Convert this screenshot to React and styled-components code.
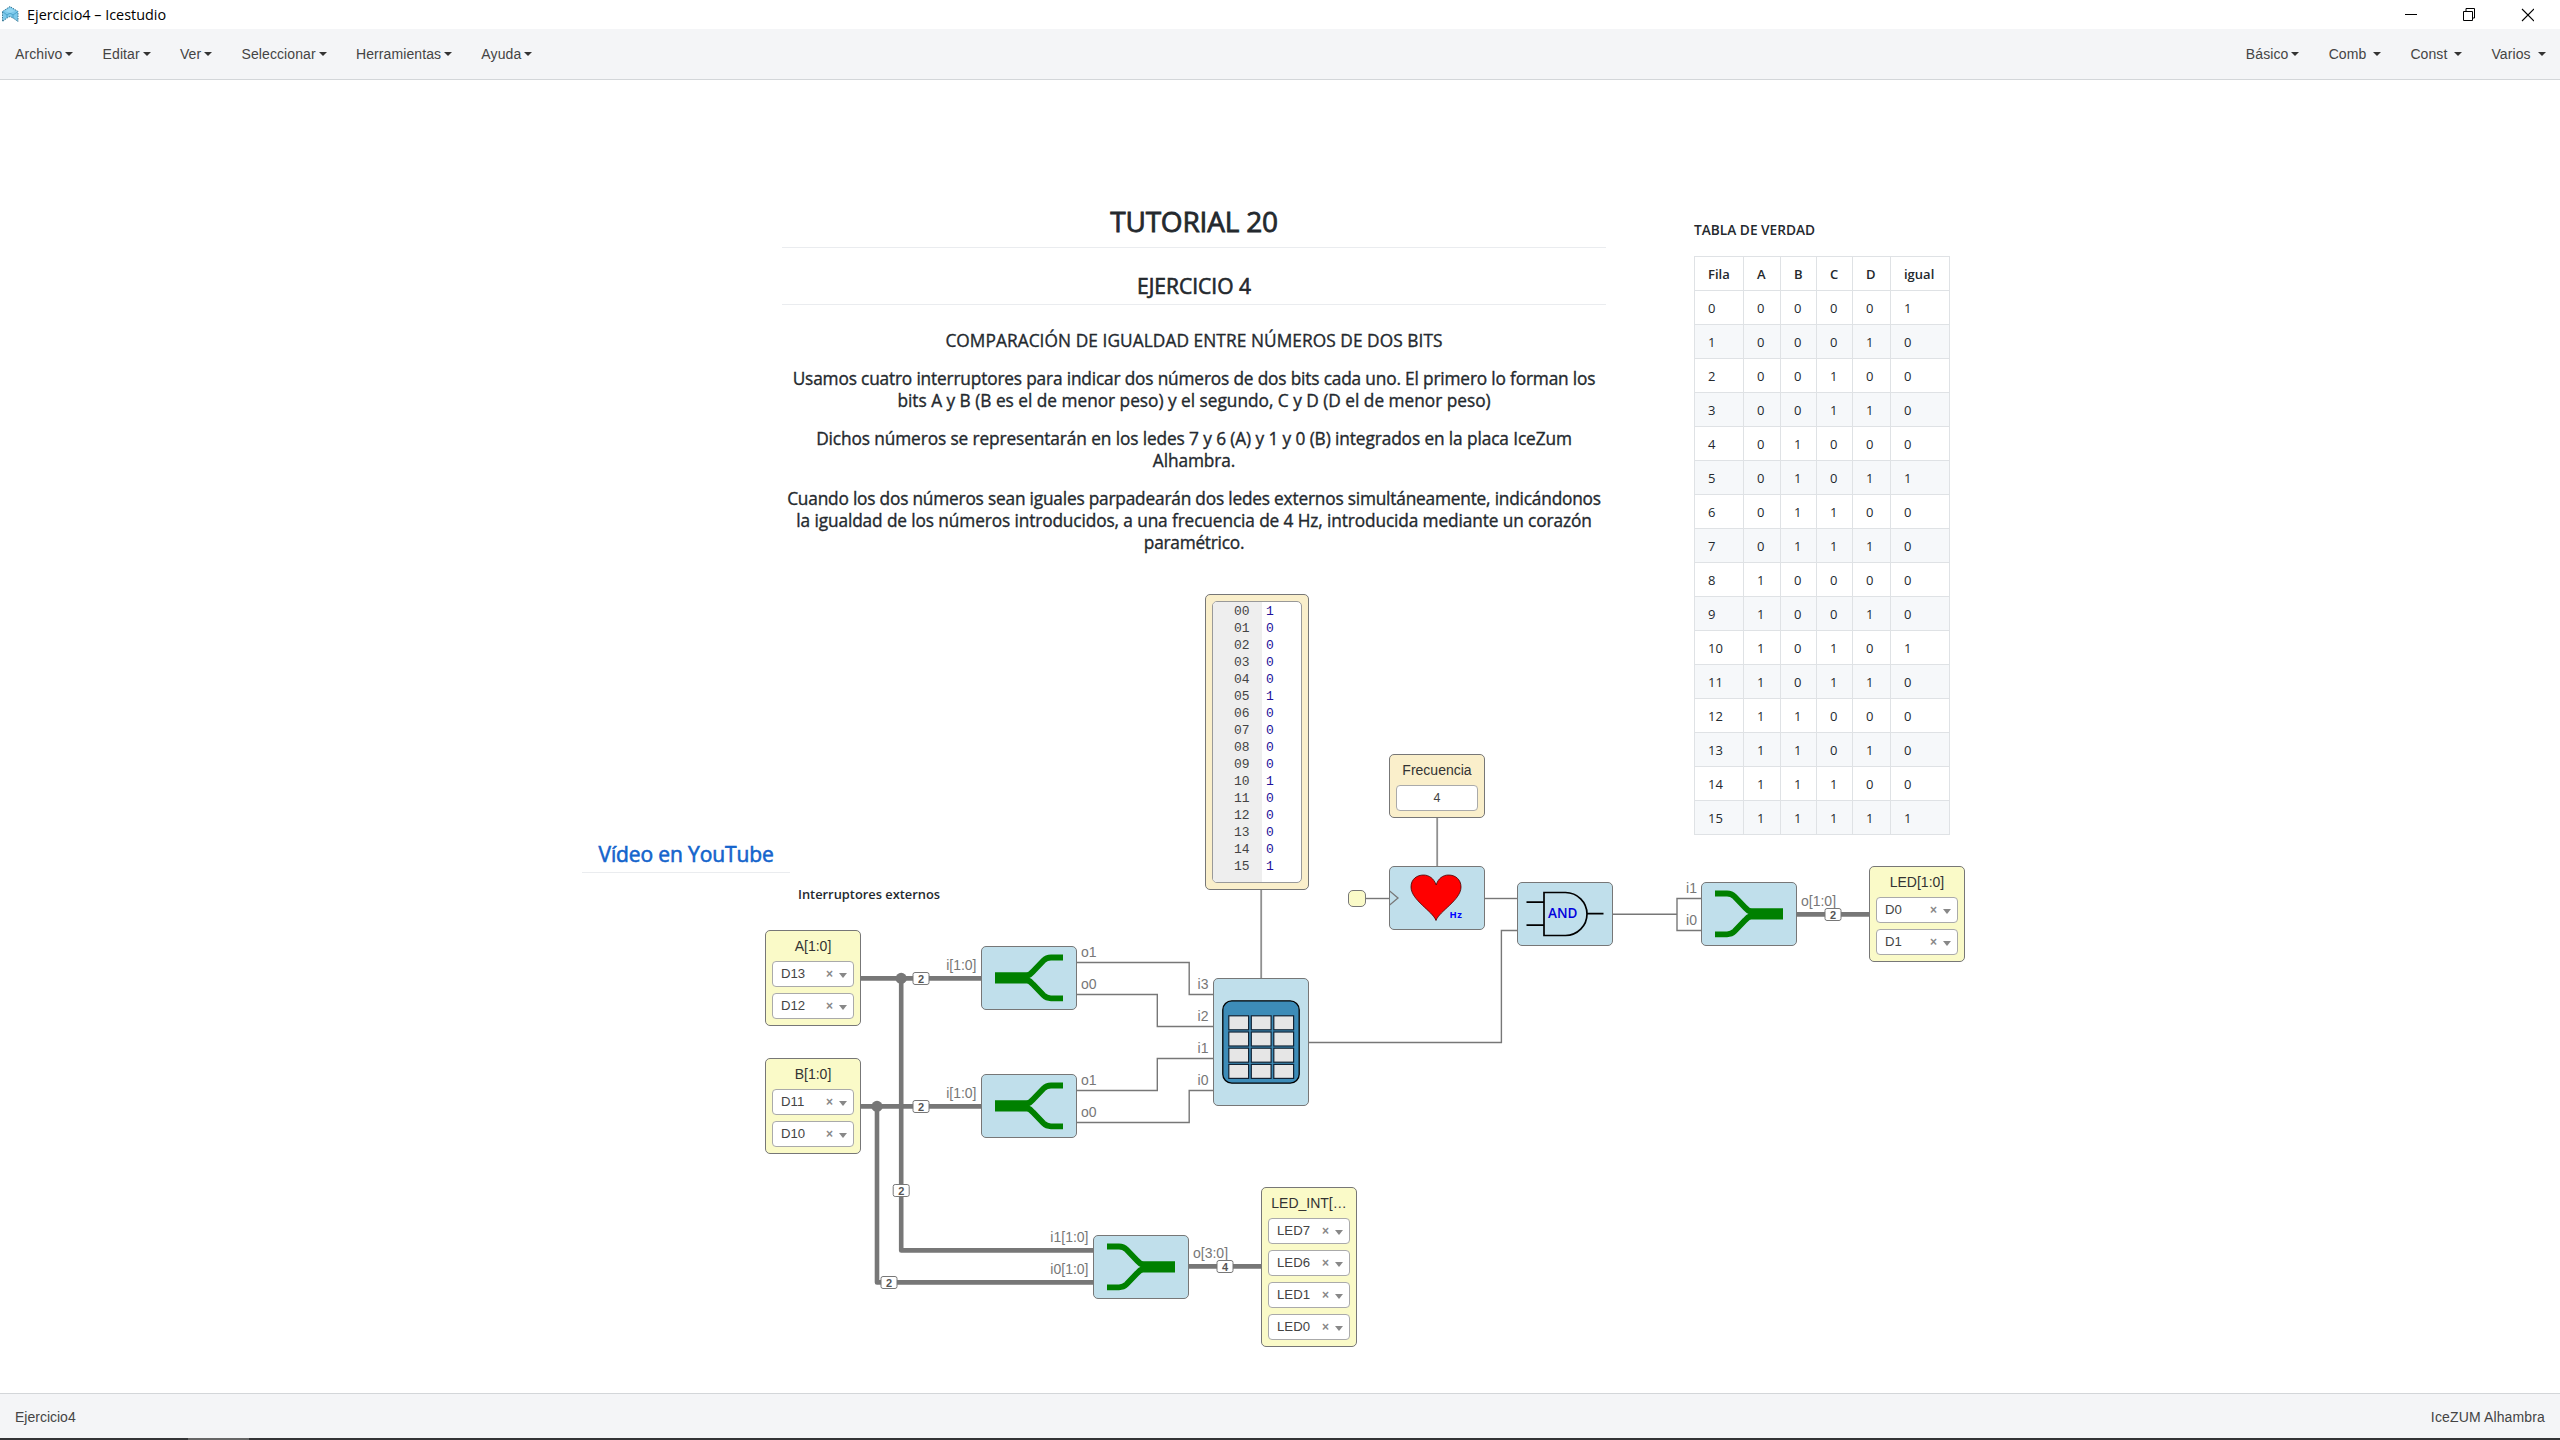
import React from 'react';
import styled, { createGlobalStyle, css } from 'styled-components';

const sans = '"Liberation Sans", Arial, sans-serif';
const doc = '"Open Sans", "Noto Sans", sans-serif';
const mono = '"Liberation Mono", "DejaVu Sans Mono", monospace';

const Global = createGlobalStyle`
  *, *::before, *::after { box-sizing: border-box; }
  body { margin: 0; background: #fff; font-family: ${sans}; overflow: hidden; }
`;

const Window = styled.div`
  display: flex;
  flex-direction: column;
  width: 2560px;
  height: 1440px;
`;

const TitleBar = styled.header`
  display: flex;
  justify-content: space-between;
  height: 29px;
  padding: 0 26px 0 2px;
`;

const TitleSide = styled.div`
  display: flex;
  align-items: center;
  gap: ${(p) => p.$gap}px;
`;

const Title = styled.span`
  font: 14.4px/29px ${doc};
  color: #000;
  white-space: nowrap;
`;

const MenuBar = styled.nav`
  display: flex;
  justify-content: space-between;
  height: 51px;
  padding: 0 14.5px 0 15px;
  background: #f4f5f7;
  border-bottom: 1px solid #d3d6d9;
`;

const MenuGroup = styled.div`
  display: flex;
  gap: 29.2px;
`;

const MenuItem = styled.div`
  display: flex;
  align-items: center;
  gap: ${(p) => p.$gap || 3}px;
  font-size: 14px;
  line-height: 50px;
  letter-spacing: 0.1px;
  color: #444;
  white-space: nowrap;

  &::after {
    content: '';
    border: 4px solid transparent;
    border-top-color: #333;
    border-bottom: 0;
  }
`;

const Canvas = styled.main`
  position: relative;
  flex: 1;
`;

const Wires = styled.svg`
  position: absolute;
  left: 0;
  top: -80px;
  width: 2560px;
  height: 1440px;
  font: 14px ${sans};
  fill: none;
`;

const PortLabel = styled.text`
  fill: #777;
  text-anchor: ${(p) => (p.$end ? 'end' : 'start')};
`;

const BadgeText = styled.text`
  font: bold 11px ${sans};
  fill: #555;
  text-anchor: middle;
`;

const placed = css`
  position: absolute;
  left: ${(p) => p.$x}px;
  top: ${(p) => p.$y - 80}px;
  width: ${(p) => p.$w}px;
`;

const Note = styled.section`
  ${placed}
  font-family: ${doc};
  color: #24292e;
  white-space: nowrap;
  text-align: ${(p) => p.$align || 'left'};
`;

const Heading = styled.h1`
  margin: 0 0 24px;
  padding-bottom: 8px;
  border-bottom: 1px solid #eaecef;
  font-size: 28px;
  font-weight: 400;
  line-height: 36px;
  letter-spacing: -0.2px;
  -webkit-text-stroke: 0.8px;
`;

const SubHeading = styled.h2`
  margin: 0 0 25px;
  padding-bottom: 3px;
  border-bottom: 1px solid #eaecef;
  font-size: 21px;
  font-weight: 400;
  line-height: 29px;
  -webkit-text-stroke: 0.6px;
`;

const Paragraph = styled.p`
  margin: 0 0 16px;
  font-size: 17.3px;
  line-height: 22px;
  -webkit-text-stroke: 0.35px;
`;

const Line = styled.span`
  display: block;
  letter-spacing: ${(p) => p.$track || 0}px;
`;

const VideoLink = styled.div`
  height: 33px;
  padding-left: 16.5px;
  border-bottom: 1px solid #eaecef;
  font-size: 21px;
  line-height: 28px;
  letter-spacing: -0.12px;
  color: #1464cc;
  -webkit-text-stroke: 0.6px;
`;

const Caption = styled.div`
  font-size: ${(p) => p.$size}px;
  font-weight: 600;
  line-height: 20px;
`;

const TruthTable = styled.div`
  display: grid;
  grid-template-columns: 49px 37px 36px 36px 38px 59px;
  grid-auto-rows: 34.03px;
  width: 256px;
  margin-top: 16px;
  border: solid #dfe2e5;
  border-width: 1px 0 0 1px;
`;

const Cell = styled.div`
  padding-left: 13px;
  border: solid #dfe2e5;
  border-width: 0 1px 1px 0;
  background: ${(p) => (p.$odd ? '#f6f8fa' : '#fff')};
  font-size: 13px;
  font-weight: ${(p) => (p.$head ? 600 : 400)};
  line-height: 34px;
`;

const Block = styled.div`
  ${placed}
  display: flex;
  flex-direction: column;
  align-items: center;
  height: ${(p) => p.$h}px;
  border: 1px solid #777;
  border-radius: 5px;
  background: ${(p) => ({ io: '#fafac8', code: '#c0dfeb', param: '#faefcb' }[p.$kind])};

  > svg { margin: -1px; flex: none; }
`;

const BlockLabel = styled.div`
  height: 30px;
  font-size: 14px;
  line-height: 31px;
  color: #333;
  white-space: nowrap;
`;

const Select = styled.div`
  display: flex;
  align-items: center;
  width: 82px;
  height: 26px;
  margin-bottom: 6px;
  padding: 0 6px 2px 8px;
  border: 1px solid #aaa;
  border-radius: 4px;
  background: #fff;
  font-size: 13.2px;
  color: #444;

  &::after {
    content: '';
    margin-top: 5px;
    border: 4px solid transparent;
    border-top: 5px solid #888;
    border-bottom: 0;
  }
`;

const Clear = styled.span`
  margin: 1px 6px 0 auto;
  font-size: 12px;
  font-weight: bold;
  color: #888;
`;

const ParamInput = styled.div`
  width: 82px;
  height: 26px;
  border: 1px solid #aaa;
  border-radius: 4px;
  background: #fff;
  font-size: 12.5px;
  line-height: 25px;
  text-align: center;
  color: #444;
`;

const Editor = styled.div`
  display: flex;
  width: 90px;
  height: 282px;
  margin-top: 6px;
  border: 1px solid #999;
  border-radius: 5px;
  overflow: hidden;
  background: #fff;
  font: 13px/17.02px ${mono};
`;

const Gutter = styled.div`
  width: 49px;
  padding: 1px 0 0 21px;
  background: #eee;
  color: #444;
`;

const Code = styled.div`
  padding: 1px 0 0 4px;
  color: #221199;
`;

const Footer = styled.footer`
  display: flex;
  justify-content: space-between;
  height: 45px;
  padding: 0 15px;
  background: #f4f5f7;
  border-top: 1px solid #d3d6d9;
  font-size: 14px;
  line-height: 47px;
  color: #444;
`;

const Board = styled.span`
  letter-spacing: 0.14px;
`;

const TaskStrip = styled.div`
  display: flex;
  height: 2px;
  padding-left: 188px;
  background: #333436;

  &::before { content: ''; width: 61px; background: #666; }
`;

const romBits = '1000010000100001'.split('');
const rows = Array.from({ length: 16 }, (_, i) => [
  i, (i >> 3) & 1, (i >> 2) & 1, (i >> 1) & 1, i & 1, romBits[i],
]);

const IceLogo = () => (
  <svg width="17" height="17" viewBox="0 0 17 17">
    <path d="M0.5 5.5 L8 .5 L16 5.5 V15.5 L11 12 L8 10.5 L5 12 L.5 15.5Z" fill="#7cc8ea" stroke="#3a7894" strokeDasharray="1.5 1" />
    <path d="M.5 5.5 L5 9 L8 7 L11 9 L16 5.5 M5 9V12 M11 9V12" fill="none" stroke="#4aa3cc" />
    <path d="M3 5 L8 2 L13 5 L8 7Z" fill="#93d6f2" />
  </svg>
);

const Controls = () => (
  <svg width="129" height="14" viewBox="0 0 129 14" fill="none" stroke="#000">
    <path d="M0 6.5H12 M58.5 3.5H67.5V12.5H58.5Z M61 3V.5H69.5V10H68" />
    <path d="M117 1L129 13 M129 1L117 13" strokeWidth="1.1" />
  </svg>
);

const Bus = ({ flip }) => (
  <svg width="96" height="64" viewBox="0 0 96 64">
    <g transform={flip ? 'translate(96 0) scale(-1 1)' : undefined}>
      <path d="M14 26.2H48V37.6H14Z" fill="#008000" />
      <path d="M45 30.5Q49 29 52 25.5L62.5 14.5Q65.5 11.5 70 11.5H82M45 33.3Q49 34.8 52 38.3L62.5 49.3Q65.5 52.3 70 52.3H82" fill="none" stroke="#008000" strokeWidth="5.8" />
    </g>
  </svg>
);

const Heart = () => (
  <svg width="96" height="64" viewBox="0 0 96 64">
    <path d="M0 24.5L9 32L0 39.5" fill="none" stroke="#777" strokeWidth="1.3" />
    <path d="M47 54.5C43.5 45 22 34 22 21C22 13 28 9 34.5 9C40 9 45 12.5 47.2 19C49 12.5 54 9 59.5 9C66.5 9 72 13.5 72 21C72 34 50.5 45 47 54.5Z" fill="#f00" stroke="#400" strokeWidth=".8" />
    <text x="60.5" y="52" fill="#00f" fontFamily={doc} fontWeight="700" fontSize="9.5" textLength="12.5">Hz</text>
  </svg>
);

const AndGate = () => (
  <svg width="96" height="64" viewBox="0 0 96 64">
    <path d="M9.5 20.2H27M9.5 43.2H27M70 31.6H86.5M27 10.5H48.5A21.5 21.5 0 0 1 48.5 53.5H27Z" fill="none" stroke="#000" strokeWidth="1.7" />
    <text x="31" y="36" fill="#00d" fontFamily={doc} fontWeight="600" fontSize="13.5" textLength="29.5">AND</text>
  </svg>
);

const TableIcon = () => (
  <svg width="96" height="128" viewBox="0 0 96 128">
    <rect x="9.8" y="22.8" width="76.4" height="82.4" rx="9" fill="#3d8cb8" stroke="#000" strokeWidth="1.3" />
    {[0, 1, 2, 3].map((r) => [0, 1, 2].map((c) => (
      <rect key={`${r}${c}`} x={15.8 + c * 22.5} y={37.8 + r * 16.2} width="19.8" height="14" fill="#e6e6e6" stroke="#123" strokeWidth="1.2" />
    )))}
  </svg>
);

const IOBlock = ({ x, y, label, pins }) => (
  <Block $kind="io" $x={x} $y={y} $w={96} $h={32 + pins.length * 32}>
    <BlockLabel>{label}</BlockLabel>
    {pins.map((pin) => (
      <Select key={pin}>{pin}<Clear>×</Clear></Select>
    ))}
  </Block>
);

const thin = [
  'M1077 962.5H1189.2V994.5H1213', 'M1077 994.5H1157.3V1026.5H1213',
  'M1077 1090.5H1157.3V1058.5H1213', 'M1077 1122.5H1189.2V1090.5H1213',
  'M1309 1042.5H1501.4V930.5H1517', 'M1366 898.5H1389', 'M1485 898.5H1517',
  'M1613 914.3H1677', 'M1701 898.5H1677V930.5H1701',
];
const thick = [
  'M861 978.4H981', 'M861 1106.4H981', 'M901.2 978.4V1250.4H1093',
  'M877 1106.4V1282.4H1093', 'M1189 1266.4H1261', 'M1797 914.4H1869',
];
const labels = [
  [976.5, 970, 'i[1:0]', 1], [976.5, 1098, 'i[1:0]', 1],
  [1081, 957, 'o1'], [1081, 989, 'o0'], [1081, 1085, 'o1'], [1081, 1117, 'o0'],
  [1208.5, 989, 'i3', 1], [1208.5, 1021, 'i2', 1], [1208.5, 1053, 'i1', 1], [1208.5, 1085, 'i0', 1],
  [1697, 893, 'i1', 1], [1697, 925, 'i0', 1], [1801, 906, 'o[1:0]'],
  [1088.5, 1242, 'i1[1:0]', 1], [1088.5, 1274, 'i0[1:0]', 1], [1193, 1258, 'o[3:0]'],
];
const badges = [
  [921, 978.5, 2], [921, 1106.5, 2], [901.2, 1190.5, 2], [889, 1282.5, 2], [1225, 1266.5, 4], [1833, 914.5, 2],
];

const WireLayer = () => (
  <Wires viewBox="0 0 2560 1440">
    {thin.map((d) => <path key={d} d={d} stroke="#777" strokeWidth="1.4" />)}
    <path d="M1261.2 890V978M1437.2 818V866" stroke="#909090" strokeWidth="1.8" />
    {thick.map((d) => <path key={d} d={d} stroke="#777" strokeWidth="4.6" strokeLinejoin="round" />)}
    <circle cx="901.2" cy="978.4" r="5.6" fill="#777" />
    <circle cx="877" cy="1106.4" r="5.6" fill="#777" />
    {labels.map(([x, y, t, end]) => <PortLabel key={`${x}-${y}`} x={x} y={y} $end={end}>{t}</PortLabel>)}
    {badges.map(([x, y, n]) => (
      <g key={`${x}-${y}`}>
        <rect x={x - 8} y={y - 6} width="16" height="12" rx="2" fill="#fff" stroke="#777" />
        <BadgeText x={x} y={y + 4}>{n}</BadgeText>
      </g>
    ))}
  </Wires>
);

export default function App() {
  return (
    <Window>
      <Global />
      <TitleBar>
        <TitleSide $gap={8}><IceLogo /><Title>Ejercicio4 – Icestudio</Title></TitleSide>
        <TitleSide><Controls /></TitleSide>
      </TitleBar>
      <MenuBar>
        <MenuGroup>
          {['Archivo', 'Editar', 'Ver', 'Seleccionar', 'Herramientas', 'Ayuda'].map((m) => <MenuItem key={m}>{m}</MenuItem>)}
        </MenuGroup>
        <MenuGroup>
          <MenuItem>Básico</MenuItem>
          {['Comb', 'Const', 'Varios'].map((m) => <MenuItem key={m} $gap={6.8}>{m}</MenuItem>)}
        </MenuGroup>
      </MenuBar>
      <Canvas>
        <WireLayer />
        <Note $x={782} $y={203} $w={824} $align="center">
          <Heading>TUTORIAL 20</Heading>
          <SubHeading>EJERCICIO 4</SubHeading>
          <Paragraph>
            <Line $track={0.07}>COMPARACIÓN DE IGUALDAD ENTRE NÚMEROS DE DOS BITS</Line>
          </Paragraph>
          <Paragraph>
            <Line $track={-0.17}>Usamos cuatro interruptores para indicar dos números de dos bits cada uno. El primero lo forman los</Line>
            <Line $track={-0.02}>bits A y B (B es el de menor peso) y el segundo, C y D (D el de menor peso)</Line>
          </Paragraph>
          <Paragraph>
            <Line $track={-0.11}>Dichos números se representarán en los ledes 7 y 6 (A) y 1 y 0 (B) integrados en la placa IceZum</Line>
            <Line $track={-0.11}>Alhambra.</Line>
          </Paragraph>
          <Paragraph>
            <Line $track={-0.2}>Cuando los dos números sean iguales parpadearán dos ledes externos simultáneamente, indicándonos</Line>
            <Line $track={-0.12}>la igualdad de los números introducidos, a una frecuencia de 4 Hz, introducida mediante un corazón</Line>
            <Line $track={-0.25}>paramétrico.</Line>
          </Paragraph>
        </Note>
        <Note $x={1694} $y={220} $w={256}>
          <Caption $size={13.7}>TABLA DE VERDAD</Caption>
          <TruthTable>
            {['Fila', 'A', 'B', 'C', 'D', 'igual'].map((h) => <Cell key={h} $head>{h}</Cell>)}
            {rows.map((r, i) => r.map((v, j) => <Cell key={`${i}-${j}`} $odd={i % 2 === 1}>{v}</Cell>))}
          </TruthTable>
        </Note>
        <Note $x={582} $y={840} $w={208}><VideoLink>Vídeo en YouTube</VideoLink></Note>
        <Note $x={798} $y={884} $w={160}><Caption $size={12.85}>Interruptores externos</Caption></Note>
        <Block $kind="param" $x={1205} $y={594} $w={104} $h={296}>
          <Editor>
            <Gutter>{rows.map(([n]) => <div key={n}>{String(n).padStart(2, '0')}</div>)}</Gutter>
            <Code>{romBits.map((b, i) => <div key={i}>{b}</div>)}</Code>
          </Editor>
        </Block>
        <Block $kind="param" $x={1389} $y={754} $w={96} $h={64}>
          <BlockLabel>Frecuencia</BlockLabel>
          <ParamInput>4</ParamInput>
        </Block>
        <Block $kind="io" $x={1348} $y={890} $w={18} $h={17} />
        <Block $kind="code" $x={1389} $y={866} $w={96} $h={64}><Heart /></Block>
        <Block $kind="code" $x={1517} $y={882} $w={96} $h={64}><AndGate /></Block>
        <Block $kind="code" $x={1701} $y={882} $w={96} $h={64}><Bus flip /></Block>
        <Block $kind="code" $x={981} $y={946} $w={96} $h={64}><Bus /></Block>
        <Block $kind="code" $x={981} $y={1074} $w={96} $h={64}><Bus /></Block>
        <Block $kind="code" $x={1093} $y={1235} $w={96} $h={64}><Bus flip /></Block>
        <Block $kind="code" $x={1213} $y={978} $w={96} $h={128}><TableIcon /></Block>
        <IOBlock x={765} y={930} label="A[1:0]" pins={['D13', 'D12']} />
        <IOBlock x={765} y={1058} label="B[1:0]" pins={['D11', 'D10']} />
        <IOBlock x={1869} y={866} label="LED[1:0]" pins={['D0', 'D1']} />
        <IOBlock x={1261} y={1187} label="LED_INT[…" pins={['LED7', 'LED6', 'LED1', 'LED0']} />
      </Canvas>
      <Footer><span>Ejercicio4</span><Board>IceZUM Alhambra</Board></Footer>
      <TaskStrip />
    </Window>
  );
}
